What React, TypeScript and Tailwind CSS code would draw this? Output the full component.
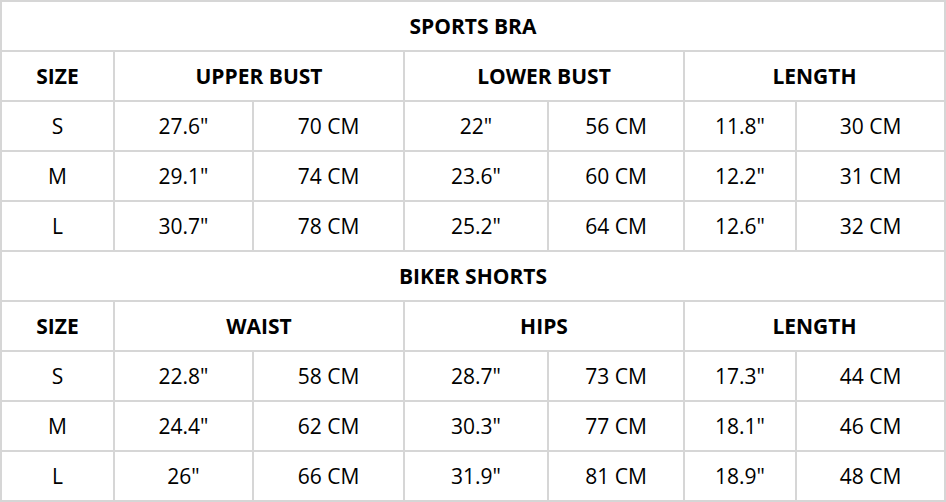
const braRows = [
  ['S', '27.6"', '70 CM', '22"', '56 CM', '11.8"', '30 CM'],
  ['M', '29.1"', '74 CM', '23.6"', '60 CM', '12.2"', '31 CM'],
  ['L', '30.7"', '78 CM', '25.2"', '64 CM', '12.6"', '32 CM'],
];

const shortsRows = [
  ['S', '22.8"', '58 CM', '28.7"', '73 CM', '17.3"', '44 CM'],
  ['M', '24.4"', '62 CM', '30.3"', '77 CM', '18.1"', '46 CM'],
  ['L', '26"', '66 CM', '31.9"', '81 CM', '18.9"', '48 CM'],
];

function Cell({ children, span, bold }: { children?: React.ReactNode; span?: string; bold?: boolean }) {
  return (
    <div
      className={`bg-white flex items-center justify-center pt-[2px] text-[21px] text-black ${span ?? ''} ${
        bold ? 'font-bold' : ''
      }`}
    >
      {children}
    </div>
  );
}

function Section({ title, heads, rows }: { title: string; heads: string[]; rows: string[][] }) {
  return (
    <>
      <Cell span="col-span-7" bold>
        {title}
      </Cell>
      <Cell bold>SIZE</Cell>
      {heads.map((h) => (
        <Cell key={h} span="col-span-2" bold>
          {h}
        </Cell>
      ))}
      {rows.map((r) => r.map((v, i) => <Cell key={r[0] + i}>{v}</Cell>))}
    </>
  );
}

export default function App() {
  return (
    <div className="w-[946px] h-[502px] bg-white" style={{ fontFamily: '"Open Sans", "Liberation Sans", sans-serif' }}>
      <div className="grid grid-cols-[111px_137px_149px_142px_134px_110px_147px] grid-rows-[repeat(10,48px)] gap-[2px] p-[2px] bg-[#d6d6d6]">
        <Section title="SPORTS BRA" heads={['UPPER BUST', 'LOWER BUST', 'LENGTH']} rows={braRows} />
        <Section title="BIKER SHORTS" heads={['WAIST', 'HIPS', 'LENGTH']} rows={shortsRows} />
      </div>
    </div>
  );
}
